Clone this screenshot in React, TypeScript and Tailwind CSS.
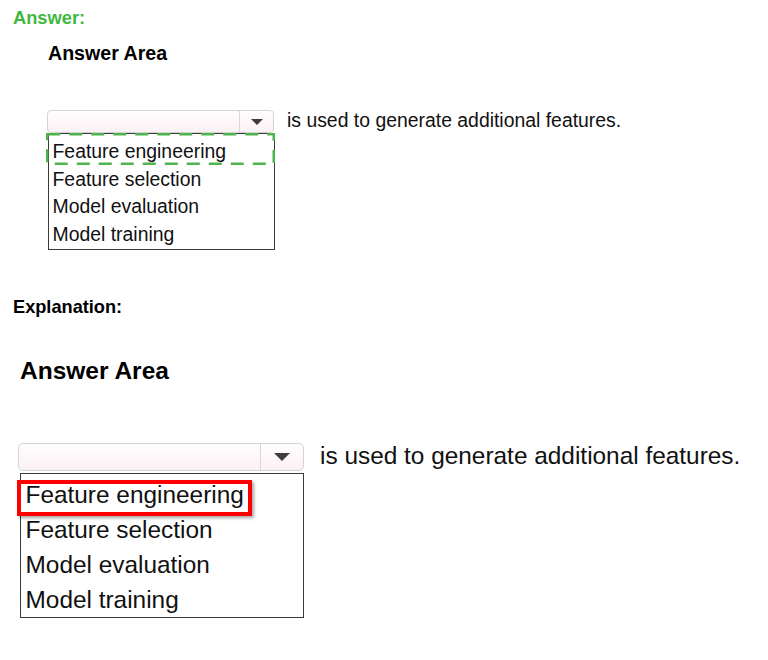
import React from "react";

function Arrow({ w, h }: { w: number; h: number }) {
  return (
    <svg width={w} height={h} viewBox={`0 0 ${w} ${h}`}>
      <polygon points={`0,0 ${w},0 ${w / 2},${h}`} fill="#3d3d3d" />
    </svg>
  );
}

const items = ["Feature engineering", "Feature selection", "Model evaluation", "Model training"];

export default function App() {
  return (
    <div className="relative w-[768px] h-[660px] bg-white overflow-hidden font-['Liberation_Sans',Arial,sans-serif] text-[#111]">
      {/* Top: Answer */}
      <div className="pt-[8px] pl-[13px] text-[18.3px] leading-[20px] font-bold text-[#3fb83f]">Answer:</div>
      <div className="mt-[13.6px] ml-[48px] text-[19.6px] leading-[22px] font-bold text-black">Answer Area</div>
      <div className="mt-[46.6px] ml-[47px] flex items-start">
        <div className="flex flex-col">
          <div className="w-[227px] h-[23px] flex rounded-[4px] border border-[#d4d4d4] bg-gradient-to-b from-[#fffdfd] to-[#fbf1f4]">
            <div className="flex-1" />
            <div className="w-[34px] border-l border-[#d8d8d8] flex items-center justify-center">
              <Arrow w={12} h={6} />
            </div>
          </div>
          <div className="relative ml-[1px] w-[227px] border border-[#3a3a3a] pt-[4px] pl-[3.5px] text-[19.4px] leading-[27.6px] bg-white">
            {items.map((t) => (
              <div key={t}>{t}</div>
            ))}
            <svg className="absolute left-[-3px] top-[-1px]" width={229} height={32}>
              <rect x={1.25} y={1.25} width={226.5} height={29.5} fill="none" stroke="#4fb34f" strokeWidth={2.5} strokeDasharray="13 9" />
            </svg>
          </div>
        </div>
        <div className="ml-[12px] text-[19.4px] leading-[20px] whitespace-nowrap">is used to generate additional features.</div>
      </div>

      {/* Bottom: Explanation */}
      <div className="mt-[47.5px] pl-[13px] text-[18.2px] leading-[20px] font-bold text-black">Explanation:</div>
      <div className="mt-[39.5px] ml-[20px] text-[24.5px] leading-[28px] font-bold text-black">Answer Area</div>
      <div className="mt-[58.7px] ml-[18px] flex items-start">
        <div className="flex flex-col">
          <div className="w-[286px] h-[28px] flex rounded-[5px] border border-[#d4d4d4] bg-gradient-to-b from-[#fffdfd] to-[#fbf1f4]">
            <div className="flex-1" />
            <div className="w-[43px] border-l border-[#d8d8d8] flex items-center justify-center">
              <Arrow w={16} h={8} />
            </div>
          </div>
          <div className="relative mt-[1.5px] ml-[2px] w-[284px] border border-[#3a3a3a] pt-[3.7px] pl-[4.5px] text-[24.4px] leading-[35px] bg-white">
            {items.map((t) => (
              <div key={t}>{t}</div>
            ))}
            <div className="absolute left-[-4px] top-[6px] w-[235px] h-[36px] border-[4px] border-[#ff0000] shadow-[2px_2px_3px_rgba(0,0,0,0.35)]" />
          </div>
        </div>
        <div className="ml-[16px] text-[24.4px] leading-[25px] whitespace-nowrap">is used to generate additional features.</div>
      </div>
    </div>
  );
}
